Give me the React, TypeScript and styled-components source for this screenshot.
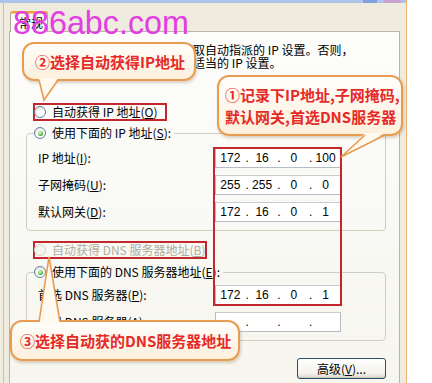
import React from "react";
import styled, { createGlobalStyle, css } from "styled-components";

const GlobalStyle = createGlobalStyle`
  html, body { margin: 0; padding: 0; background: #fff; }
  body {
    font-family: "Noto Sans CJK SC", "Noto Sans", sans-serif;
    font-size: 12px;
    color: #000;
  }
`;

const Page = styled.div`
  position: relative;
  width: 432px;
  height: 383px;
  overflow: hidden;
  background: #fff;
`;

const Frame = styled.div`
  width: 407px;
  height: 383px;
  box-sizing: border-box;
  display: flex;
  flex-direction: column;
  background: #efecdf;
  border-right: 1px solid #eab26c;
`;

const TitleStrip = styled.div`
  flex: none;
  height: 3px;
  display: flex;
  justify-content: flex-end;
  gap: 7px;
  padding-right: 5px;
  background: #aec4ea;
`;

const TitleCap = styled.span<{ $tone: string; $w: number }>`
  width: ${(p) => p.$w}px;
  background: ${(p) => p.$tone};
`;

const Body = styled.div`
  flex: 1;
  display: flex;
  min-height: 0;
  padding-left: 3px;
`;

const Sheet = styled.div`
  flex: 1;
  display: flex;
  flex-direction: column;
  min-height: 0;
  border-left: 1px solid #e9b97c;
  padding: 8px 6px 0 5px;
`;

const TabRow = styled.div`
  position: relative;
  z-index: 1;
  display: flex;
  padding-left: 1px;
  margin-bottom: -1px;
`;

const Tab = styled.div`
  height: 21px;
  box-sizing: border-box;
  display: flex;
  align-items: center;
  padding: 0 4px 0 8px;
  background: #fcfcfe;
  border: 1px solid #a9a594;
  border-top: 2px solid #eea03c;
  border-bottom: none;
  border-radius: 3px 3px 0 0;
  box-shadow: inset 0 1px 0 #ffd36a;
`;

const Panel = styled.div`
  flex: 1;
  display: flex;
  flex-direction: column;
  border: 1px solid #bab6a4;
  border-bottom: none;
  background: linear-gradient(#fdfdfc, #f6f5ee);
  padding: 11px 13px 0 16px;
`;

const Intro = styled.p`
  margin: 0 0 0 -1px;
  line-height: 13px;
  white-space: nowrap;
`;

const Choice = styled.div<{ $top?: number; $w?: number; $mark?: boolean; $dim?: boolean }>`
  display: flex;
  align-items: center;
  gap: 6px;
  height: 16px;
  line-height: 16px;
  white-space: nowrap;
  align-self: flex-start;
  margin: ${(p) => p.$top ?? 0}px 0 0 8px;
  color: ${(p) => (p.$dim ? "#b0ada0" : "#000")};
  ${(p) =>
    p.$mark &&
    css`
      width: ${p.$w}px;
      outline: 2px solid #c4262e;
      outline-offset: -1px;
    `}
`;

const Radio = styled.span<{ $on?: boolean; $dim?: boolean }>`
  position: relative;
  flex: none;
  width: 12px;
  height: 12px;
  box-sizing: border-box;
  border-radius: 50%;
  border: 1px solid ${(p) => (p.$dim ? "#d4d2c6" : "#5f7f9f")};
  background: ${(p) =>
    p.$dim ? "#f6f5ef" : "radial-gradient(circle at 65% 70%, #ffffff 0 35%, #dcdad0 100%)"};
  ${(p) =>
    p.$on &&
    css`
      &::after {
        content: "";
        position: absolute;
        inset: 2.5px;
        border-radius: 50%;
        background: radial-gradient(circle at 40% 35%, #b9f0a8 0 20%, #2f9c2a 75%);
      }
    `}
`;

const Group = styled.fieldset<{ $top: number; $padTop: number }>`
  margin: ${(p) => p.$top}px 0 0;
  padding: ${(p) => p.$padTop}px 0 8px 11px;
  min-width: 0;
  border: 1px solid #d0cfbf;
  border-radius: 4px;
`;

const Legend = styled.legend`
  display: flex;
  align-items: center;
  gap: 6px;
  height: 16px;
  line-height: 16px;
  margin-left: -4px;
  padding: 0 3px 0 0;
  white-space: nowrap;
`;

const Fields = styled.div`
  display: flex;
  flex-direction: column;
  gap: 7px;
`;

const Field = styled.div`
  display: grid;
  grid-template-columns: 177px 126px;
  align-items: center;
  height: 20px;
`;

const Label = styled.span`
  line-height: 16px;
  white-space: nowrap;
`;

const IpBox = styled.div`
  width: 126px;
  height: 20px;
  box-sizing: border-box;
  display: grid;
  grid-template-columns: 1fr 5px 1fr 5px 1fr 5px 1fr;
  align-items: center;
  padding: 0 1px;
  border: 1px solid #b6bcc2;
  border-top-color: #c9cdd1;
  background: #fff;
  font-family: "Liberation Sans", Arial, sans-serif;
  font-size: 12px;
  line-height: 18px;
`;

const Octet = styled.span`
  text-align: center;
`;

const Dot = styled.span`
  text-align: right;
`;

const ButtonRow = styled.div`
  display: flex;
  justify-content: flex-end;
  margin-top: 17px;
`;

const Advanced = styled.button`
  width: 89px;
  height: 21px;
  padding: 0;
  font: inherit;
  color: #000;
  border: 1px solid #2b4d74;
  border-radius: 3px;
  background: linear-gradient(#ffffff, #f3f2ec 75%, #d9d5c7);
  box-shadow: inset 0 -1px 0 #cfcab8;
`;

const Marker = styled.div`
  position: absolute;
  z-index: 2;
  left: 213px;
  top: 147px;
  width: 129px;
  height: 159px;
  box-sizing: border-box;
  border: 2px solid #c4262e;
  pointer-events: none;
`;

const Callout = styled.div<{ $x: number; $y: number; $w: number; $h: number; $pad: number }>`
  position: absolute;
  z-index: 3;
  left: ${(p) => p.$x}px;
  top: ${(p) => p.$y}px;
  width: ${(p) => p.$w}px;
  height: ${(p) => p.$h}px;
  box-sizing: border-box;
  display: flex;
  flex-direction: column;
  justify-content: center;
  padding-left: ${(p) => p.$pad}px;
  border: 2px solid #e89c52;
  border-radius: 12px;
  background: linear-gradient(#fffefb, #fdf0dc);
  box-shadow: 1px 2px 3px rgba(120, 80, 30, 0.25);
  color: #e52a27;
  font-weight: 700;
  font-size: 15px;
  line-height: 22px;
  white-space: nowrap;
`;

const Tails = styled.svg`
  position: absolute;
  z-index: 4;
  left: 0;
  top: 0;
  pointer-events: none;
`;

const Watermark = styled.div`
  position: absolute;
  z-index: 5;
  left: 13px;
  top: 5px;
  font-family: "Liberation Sans", Arial, sans-serif;
  font-size: 34px;
  line-height: 34px;
  color: #e23ee0;
  transform: scaleX(0.95);
  transform-origin: left top;
  pointer-events: none;
`;

const IpField = ({ parts }: { parts: string[] }) => (
  <IpBox>
    {parts.map((v, i) => (
      <React.Fragment key={i}>
        {i > 0 && <Dot>.</Dot>}
        <Octet>{v}</Octet>
      </React.Fragment>
    ))}
  </IpBox>
);

const tails = [
  { fill: "39,78 44,100 58,78", line: "39,80 44,100 58,80" },
  { fill: "365,133 341,157 385,133", line: "365,135 341,157 385,135" },
  { fill: "39,324 49,257 60,324", line: "39,322 49,257 60,322" },
];

export default function App() {
  return (
    <Page>
      <GlobalStyle />
      <Frame>
        <TitleStrip>
          <TitleCap $tone="#7f9fdf" $w={14} />
          <TitleCap $tone="#c8a3cf" $w={17} />
        </TitleStrip>
        <Body>
          <Sheet>
            <TabRow>
              <Tab>常规</Tab>
            </TabRow>
            <Panel>
              <Intro>
                如果网络支持此功能，则可以获取自动指派的 IP 设置。否则，
                <br />
                您需要从网络系统管理员处获得适当的 IP 设置。
              </Intro>

              <Choice $top={35} $w={132} $mark>
                <Radio />
                <span>
                  自动获得 IP 地址(<u>O</u>)
                </span>
              </Choice>

              <Group $top={5} $padTop={7}>
                <Legend>
                  <Radio $on />
                  <span>
                    使用下面的 IP 地址(<u>S</u>):
                  </span>
                </Legend>
                <Fields>
                  <Field>
                    <Label>
                      IP 地址(<u>I</u>):
                    </Label>
                    <IpField parts={["172", "16", "0", "100"]} />
                  </Field>
                  <Field>
                    <Label>
                      子网掩码(<u>U</u>):
                    </Label>
                    <IpField parts={["255", "255", "0", "0"]} />
                  </Field>
                  <Field>
                    <Label>
                      默认网关(<u>D</u>):
                    </Label>
                    <IpField parts={["172", "16", "0", "1"]} />
                  </Field>
                </Fields>
              </Group>

              <Choice $top={11} $w={172} $mark $dim>
                <Radio $dim />
                <span>
                  自动获得 DNS 服务器地址(<u>B</u>)
                </span>
              </Choice>

              <Group $top={6} $padTop={5}>
                <Legend>
                  <Radio $on />
                  <span>
                    使用下面的 DNS 服务器地址(<u>E</u>):
                  </span>
                </Legend>
                <Fields>
                  <Field>
                    <Label>
                      首选 DNS 服务器(<u>P</u>):
                    </Label>
                    <IpField parts={["172", "16", "0", "1"]} />
                  </Field>
                  <Field>
                    <Label>
                      备用 DNS 服务器(<u>A</u>):
                    </Label>
                    <IpField parts={["", "", "", ""]} />
                  </Field>
                </Fields>
              </Group>

              <ButtonRow>
                <Advanced>
                  高级(<u>V</u>)...
                </Advanced>
              </ButtonRow>
            </Panel>
          </Sheet>
        </Body>
      </Frame>

      <Marker />

      <Callout $x={22} $y={42} $w={174} $h={39} $pad={11}>
        ②选择自动获得IP地址
      </Callout>
      <Callout $x={217} $y={75} $w={186} $h={61} $pad={6}>
        <span>①记录下IP地址,子网掩码,</span>
        <span>默认网关,首选DNS服务器</span>
      </Callout>
      <Callout $x={10} $y={320} $w={230} $h={41} $pad={8}>
        ③选择自动获的DNS服务器地址
      </Callout>

      <Tails width={432} height={383}>
        {tails.map((t, i) => (
          <g key={i}>
            <polygon points={t.fill} fill="#fff9ef" />
            <polyline points={t.line} fill="none" stroke="#e89c52" strokeWidth={1.6} />
          </g>
        ))}
      </Tails>

      <Watermark>886abc.com</Watermark>
    </Page>
  );
}
